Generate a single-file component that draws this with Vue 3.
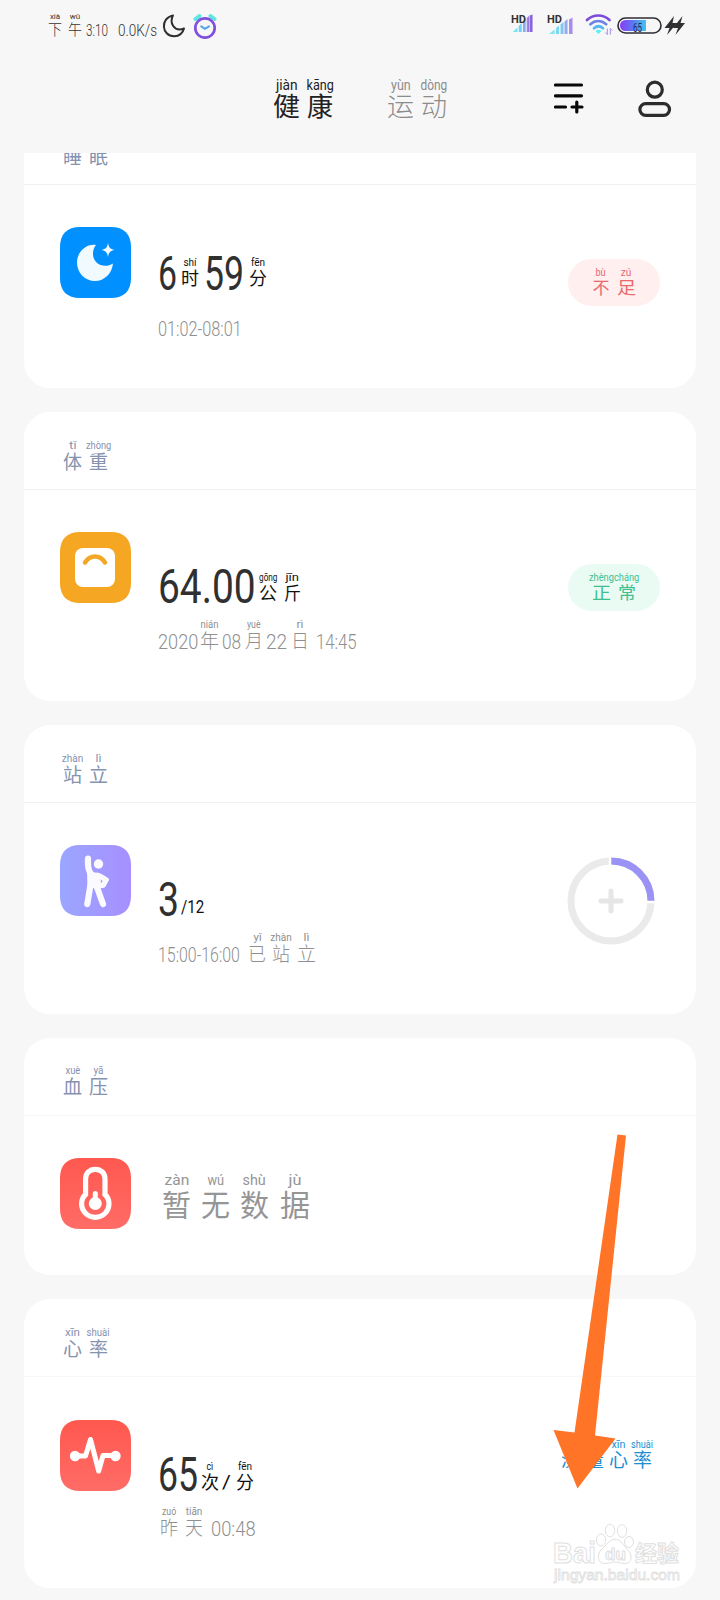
<script setup>
const fit = (el, { value }) => {
  if (!value) return
  el.style.transform = 'none'
  const natural = el.offsetWidth
  if (natural) el.style.transform = `translateX(${(value - natural) / 2}px) scaleX(${value / natural})`
}
const center = (el, { value }) => {
  el.style.transform = 'none'
  const natural = el.offsetWidth
  if (natural) el.style.transform = `scaleX(${value / natural})`
}
const vFit = { mounted: fit, updated: fit }
const vPinyin = { mounted: center, updated: center }

// t: text, w: width, g: gap before, p: pinyin, pw: pinyin width, b: raise above the row's bottom, k: kind
const statusLeft = [
  { t: '下', w: 14, g: 0, p: 'xià', pw: 10, k: 'han' },
  { t: '午', w: 14, g: 6, p: 'wǔ', pw: 10, k: 'han' },
  { t: '3:10', w: 22, g: 4, b: 1 },
  { t: '0.0K/s', w: 39, g: 10, b: 1 },
]
const tabs = [
  { name: 'health', runs: [
    { t: '健', w: 27, g: 0, p: 'jiàn', pw: 22, k: 'han' },
    { t: '康', w: 26, g: 7, p: 'kāng', pw: 27, k: 'han' } ] },
  { name: 'sport', runs: [
    { t: '运', w: 27, g: 0, p: 'yùn', pw: 20, k: 'han' },
    { t: '动', w: 26, g: 7, p: 'dòng', pw: 27, k: 'han' } ] },
]
const title = (a, pa, wa, b, pb, wb) => [
  { t: a, w: 19, g: 0, p: pa, pw: wa, k: 'han' },
  { t: b, w: 19, g: 7, p: pb, pw: wb, k: 'han' },
]
const cards = [
  {
    id: 'sleep', title: title('睡', '', 0, '眠', '', 0),
    value: [
      { t: '6', w: 19, g: 0, k: 'big' },
      { t: '时', w: 18, g: 4, p: 'shí', pw: 13, b: 3, k: 'han' },
      { t: '59', w: 40, g: 5, k: 'big' },
      { t: '分', w: 18, g: 5, p: 'fēn', pw: 14, b: 3, k: 'han' },
    ],
    sub: [{ t: '01:02-08:01', w: 84, g: 0 }],
    badge: [
      { t: '不', w: 17, g: 0, p: 'bù', pw: 10, k: 'han' },
      { t: '足', w: 19, g: 7, p: 'zú', pw: 10, k: 'han' },
    ],
  },
  {
    id: 'weight', title: title('体', 'tǐ', 8, '重', 'zhòng', 25),
    value: [
      { t: '64.00', w: 98, g: 0, k: 'big' },
      { t: '公', w: 18, g: 3, p: 'gōng', pw: 18, b: 1, k: 'han' },
      { t: '斤', w: 17, g: 7, p: 'jīn', pw: 13, b: 1, k: 'han' },
    ],
    sub: [
      { t: '2020', w: 40, g: 0 },
      { t: '年', w: 19, g: 2, p: 'nián', pw: 18, k: 'han low' },
      { t: '08', w: 19, g: 3 },
      { t: '月', w: 18, g: 4, p: 'yuè', pw: 14, k: 'han low' },
      { t: '22', w: 21, g: 3 },
      { t: '日', w: 18, g: 4, p: 'rì', pw: 7, k: 'han low' },
      { t: '14:45', w: 41, g: 7 },
    ],
    badge: [
      { t: '正', w: 19, g: 0, p: 'zhèng', pw: 25, k: 'han' },
      { t: '常', w: 18, g: 7, p: 'cháng', pw: 25, k: 'han' },
    ],
  },
  {
    id: 'stand', title: title('站', 'zhàn', 21, '立', 'lì', 6),
    value: [
      { t: '3', w: 21, g: 0, k: 'big' },
      { t: '/12', w: 23, g: 2, b: 3, k: 'unit' },
    ],
    sub: [
      { t: '15:00-16:00', w: 82, g: 0 },
      { t: '已', w: 18, g: 8, p: 'yǐ', pw: 8, k: 'han low' },
      { t: '站', w: 18, g: 6, p: 'zhàn', pw: 21, k: 'han low' },
      { t: '立', w: 19, g: 7, p: 'lì', pw: 6, k: 'han low' },
    ],
    ring: true,
  },
  {
    id: 'pressure', title: title('血', 'xuè', 15, '压', 'yā', 10),
    value: [
      { t: '暂', w: 29, g: 4, p: 'zàn', pw: 25, k: 'han' },
      { t: '无', w: 29, g: 10, p: 'wú', pw: 17, k: 'han' },
      { t: '数', w: 29, g: 10, p: 'shù', pw: 23, k: 'han' },
      { t: '据', w: 30, g: 11, p: 'jù', pw: 13, k: 'han' },
    ],
  },
  {
    id: 'heart', title: title('心', 'xīn', 15, '率', 'shuài', 23),
    value: [
      { t: '65', w: 40, g: 0, k: 'big' },
      { t: '次', w: 18, g: 3, p: 'cì', pw: 7, k: 'han' },
      { t: '/', w: 9, g: 3, b: 3, k: 'unit' },
      { t: '分', w: 18, g: 5, p: 'fēn', pw: 14, k: 'han' },
    ],
    sub: [
      { t: '昨', w: 18, g: 2, p: 'zuó', pw: 14, k: 'han low' },
      { t: '天', w: 18, g: 7, p: 'tiān', pw: 17, k: 'han low' },
      { t: '00:48', w: 45, g: 8 },
    ],
    action: [
      { t: '测', w: 19, g: 0, p: 'cè', pw: 9, k: 'han' },
      { t: '量', w: 19, g: 5, p: 'liáng', pw: 22, k: 'han' },
      { t: '心', w: 19, g: 5, p: 'xīn', pw: 14, k: 'han' },
      { t: '率', w: 19, g: 5, p: 'shuài', pw: 22, k: 'han' },
    ],
  },
]
</script>

<template>
  <div class="phone">
    <div class="status">
      <div class="runs tiny">
        <span v-for="(r, i) in statusLeft" :key="i" class="run" :class="r.k" :style="{ width: r.w + 'px', marginLeft: r.g + 'px', paddingBottom: (r.b || 0) + 'px' }">
          <span v-if="r.p" class="py"><i v-pinyin="r.pw">{{ r.p }}</i></span><b class="tx" v-fit="r.w">{{ r.t }}</b>
        </span>
      </div>
      <svg class="moon" width="24" height="24" viewBox="0 0 24 24"><path d="M11 1.400C-1.800 3.800-.8 22.200 12.200 22.200c4.800 0 8.400-2.600 9.800-7.700-4.300 1.800-8.500.8-10.800-2.500-2.200-3.200-2-7-.2-10.600z" fill="none" stroke="#2f2f2f" stroke-width="2" stroke-linejoin="round" /></svg>
      <svg class="alarm" width="24" height="26" viewBox="0 0 24 26">
        <path d="M2.500 6 6.500 3M17.500 3l4 3" stroke="#5fe6e2" stroke-width="4" stroke-linecap="round" />
        <circle cx="12" cy="15" r="9.700" fill="#f7f7f7" stroke="#8150dc" stroke-width="2.700" />
        <path d="m8.200 13.300 3.800 2.500 4-2.500" fill="none" stroke="#55a4e8" stroke-width="2" stroke-linecap="round" stroke-linejoin="round" />
      </svg>
      <svg class="signals" width="175" height="24" viewBox="0 0 175 24">
        <defs>
          <linearGradient id="sig" x1="0" x2="1"><stop offset="0" stop-color="#79f2ee" /><stop offset=".45" stop-color="#74cdf2" /><stop offset=".75" stop-color="#9a85e8" /><stop offset="1" stop-color="#8752d8" /></linearGradient>
          <linearGradient id="sig2" x1="0" x2="1"><stop offset="0" stop-color="#79f5ee" /><stop offset=".5" stop-color="#7ccdf2" /><stop offset="1" stop-color="#ad83ea" /></linearGradient>
          <linearGradient id="bat" x1="0" x2="1"><stop offset="0" stop-color="#8a3cf5" /><stop offset=".5" stop-color="#5c79f5" /><stop offset="1" stop-color="#3fc3f3" /></linearGradient>
        </defs>
        <path fill="url(#sig)" d="M2.500 18 7.500 13.500V18zM8.700 18v-6l3-3v9zM12.900 18V8l2.700-3v13zM16.700 18V4l2.300-2v16zM19.500 18V1.500l3-1V18z" />
        <text x="1" y="9" class="hd" textLength="15" lengthAdjust="spacingAndGlyphs">HD</text>
        <path fill="url(#sig2)" d="M39 20l5.500-4.500V20zM46 20v-6l3-2.500V20zM50.500 20v-9.500l3-2.500v12zM54.500 20V7.500L57.500 5v15zM59 20V5.500l3.500-2V20z" />
        <text x="37" y="9" class="hd" textLength="15" lengthAdjust="spacingAndGlyphs">HD</text>
        <g fill="none" stroke-width="2.700" stroke-linecap="round">
          <path d="M77 6c6.500-6 16-6 22.500 0" stroke="#7c4bdb" />
          <path d="M80.300 10.200c4.900-4 11-4 15.900 0" stroke="#6c83e5" />
          <path d="M84 14.200c2.900-2.500 6.100-2.500 9 0" stroke="#55baf2" />
        </g>
        <path d="M85.500 17c2-1.700 4-1.700 6 0l-3 3z" fill="#5eeff0" />
        <path d="M97.300 14.500v6l-2-2m5 2v-6l2 2" fill="none" stroke="#a48be8" />
        <rect x="108" y="4" width="43" height="15" rx="7.500" fill="none" stroke="#2d2d35" stroke-width="1.600" />
        <path d="M115.500 6H136v11h-20.500a5.500 5.500 0 0 1 0-11z" fill="url(#bat)" />
        <text x="123" y="18" class="pct" textLength="9" lengthAdjust="spacingAndGlyphs">65</text>
        <path d="m164 2-9.500 12h5L157 21l10-12h-4.500zM172.500 2l-9.500 12h5L165.500 21 175 9h-4.500z" fill="#303030" />
      </svg>
    </div>

    <div class="topbar">
      <div v-for="tab in tabs" :key="tab.name" class="runs tab" :class="tab.name">
        <span v-for="(r, i) in tab.runs" :key="i" class="run" :class="r.k" :style="{ width: r.w + 'px', marginLeft: r.g + 'px' }">
          <span class="py"><i v-pinyin="r.pw">{{ r.p }}</i></span><b class="tx" v-fit="r.w">{{ r.t }}</b>
        </span>
      </div>
      <svg class="list" width="30" height="32" viewBox="0 0 30 32"><path d="M1.500 2h26M1.500 12.800h26M1.500 24h10M18 24h10M22.800 19v10" fill="none" stroke="#080808" stroke-width="3.200" stroke-linecap="round" /></svg>
      <svg class="person" width="34" height="38" viewBox="0 0 34 38"><circle cx="16.800" cy="9.700" r="7.500" fill="none" stroke="#2c2c2c" stroke-width="3.200" /><rect x="1.900" y="23.700" width="29.600" height="11.600" rx="5.800" fill="none" stroke="#2c2c2c" stroke-width="3.200" /></svg>
    </div>

    <div class="feed">
      <section v-for="c in cards" :key="c.id" class="card" :class="c.id">
        <header class="runs title">
          <span v-for="(r, i) in c.title" :key="i" class="run" :class="r.k" :style="{ width: r.w + 'px', marginLeft: r.g + 'px' }">
            <span v-if="r.p" class="py"><i v-pinyin="r.pw">{{ r.p }}</i></span><b class="tx" v-fit="r.w">{{ r.t }}</b>
          </span>
        </header>
        <div class="body">
          <svg class="icon" width="71" height="71" viewBox="0 0 71 71">
            <defs>
              <linearGradient id="violet" x1="0" x2="1"><stop offset="0" stop-color="#9ba6ff" /><stop offset="1" stop-color="#a78fff" /></linearGradient>
              <linearGradient id="red" x1="0" x2="0" y1="0" y2="1"><stop offset="0" stop-color="#ff584f" /><stop offset="1" stop-color="#ff6c66" /></linearGradient>
            </defs>
            <path class="tile" d="M0 20C0 7 7 0 20 0h31c13 0 20 7 20 20v31c0 13-7 20-20 20H20C7 71 0 64 0 51z" />
            <g v-if="c.id === 'sleep'" fill="#f0faff">
              <path d="M36 18C26 16.500 17 25 17 35.500c0 10.500 8 18.500 18 18.500 9.500 0 17-7.500 18-17.500C44 42 33 37 33 27c0-3.500.8-6.500 3-9z" />
              <path d="M48 16c.8 4.500 2 6 6.500 7-4.500 1-5.700 2.500-6.500 7-.8-4.500-2-6-6.500-7 4.500-1 5.700-2.500 6.500-7z" />
            </g>
            <g v-else-if="c.id === 'weight'">
              <rect x="15" y="16" width="40" height="39" rx="8" fill="#fff" />
              <path d="M25 30.500c5-8 15-8 20 0" fill="none" stroke="#f2a727" stroke-width="4.500" stroke-linecap="round" />
            </g>
            <g v-else-if="c.id === 'stand'">
              <circle cx="38.500" cy="19" r="4.700" fill="#fbfaff" />
              <path d="M28 13.500c-.5 8 0 12 3 15.500l2 2M30.500 40l-3.200 19M36.500 41 43 59" fill="none" stroke="#fbfaff" stroke-width="6.200" stroke-linecap="round" />
              <path d="M27 25c2.500 2.500 5 2.500 8 2.500 5 0 8 2 13 5.500 1 .7 1.300 1.600.8 2.600L45.500 41.500c-.7 1.200-2 1.600-4 1.600l-3.500 2L34 43l-6.500 1z" fill="#fbfaff" />
              <path d="M40.800 34.500v4l1.800-2.500z" fill="#a39bfd" />
            </g>
            <g v-else-if="c.id === 'pressure'" fill="none" stroke="#fff">
              <path d="M25.600 36.500V21c0-5.800 4.200-9.700 9.700-9.700s9.700 3.900 9.700 9.700v15.500c2.700 2.500 4 5.500 4 9 0 7.600-6 13.800-13.700 13.800s-13.700-6.200-13.700-13.800c0-3.500 1.300-6.500 4-9z" stroke-width="5.200" />
              <path d="M35.300 35.500v8" stroke-width="5" stroke-linecap="round" /><circle cx="35.300" cy="45.500" r="6.500" fill="#fff" stroke="none" />
            </g>
            <g v-else>
              <path d="M14 36h11.500L30.500 19.500l8.200 31.500 4.300-15.500H56" fill="none" stroke="#fff" stroke-width="5" stroke-linejoin="round" />
              <circle cx="15" cy="36" r="5.200" fill="#fff" /><circle cx="55.500" cy="36" r="5.200" fill="#fff" />
            </g>
          </svg>
          <div class="texts">
            <div class="runs value">
              <span v-for="(r, i) in c.value" :key="i" class="run" :class="r.k" :style="{ width: r.w + 'px', marginLeft: r.g + 'px', paddingBottom: (r.b || 0) + 'px' }">
                <span v-if="r.p" class="py"><i v-pinyin="r.pw">{{ r.p }}</i></span><b class="tx" v-fit="r.w">{{ r.t }}</b>
              </span>
            </div>
            <div v-if="c.sub" class="runs sub">
              <span v-for="(r, i) in c.sub" :key="i" class="run" :class="r.k" :style="{ width: r.w + 'px', marginLeft: r.g + 'px' }">
                <span v-if="r.p" class="py"><i v-pinyin="r.pw">{{ r.p }}</i></span><b class="tx" v-fit="r.w">{{ r.t }}</b>
              </span>
            </div>
          </div>
          <div v-if="c.badge || c.action" class="runs" :class="c.badge ? 'badge' : 'action'">
            <span v-for="(r, i) in c.badge || c.action" :key="i" class="run" :class="r.k" :style="{ width: r.w + 'px', marginLeft: r.g + 'px' }">
              <span class="py"><i v-pinyin="r.pw">{{ r.p }}</i></span><b class="tx" v-fit="r.w">{{ r.t }}</b>
            </span>
          </div>
          <svg v-if="c.ring" class="ring" width="88" height="88" viewBox="0 0 88 88">
            <circle cx="44" cy="44" r="40" fill="none" stroke="#eaeaea" stroke-width="7" />
            <path d="M44 4a40 40 0 0 1 40 40" fill="none" stroke="#9a92f5" stroke-width="7" />
            <path d="M43 0v8M80 45h8" stroke="#fff" stroke-width="2.600" />
            <path d="M44 34v20M34 44h20" stroke="#e6e6e6" stroke-width="5" stroke-linecap="round" />
          </svg>
        </div>
      </section>
    </div>

    <svg class="arrow" width="64" height="356" viewBox="0 0 64 356"><path d="M64.500 2 73 3 42 303l20.500 3L24.500 356 .5 297.500 21.500 300z" transform="translate(0 -.5)" fill="#ff7426" /></svg>

    <svg class="watermark" width="130" height="66" viewBox="0 0 130 66">
      <g fill="#fff" stroke="#e0e0e0" stroke-width="1">
        <text x="2" y="41" font-size="30" font-weight="700" textLength="43" lengthAdjust="spacingAndGlyphs">Bai</text>
        <ellipse cx="50" cy="18" rx="4.700" ry="6" /><ellipse cx="59" cy="8.500" rx="4.700" ry="6.300" /><ellipse cx="71" cy="9" rx="4.700" ry="6.300" /><ellipse cx="78" cy="20" rx="4.500" ry="5.500" />
        <path d="M57 21c4-5 10-5 14 0l6 7c4 4 5 13.500-3 13.500-5 0-6-1.500-10-1.500s-5 1.500-10 1.500c-8 0-8-9-4-13.500z" />
        <text x="54" y="38" font-size="17" font-weight="700" textLength="21" lengthAdjust="spacingAndGlyphs">du</text>
        <text x="84" y="39" font-size="22" font-weight="700" textLength="44" lengthAdjust="spacingAndGlyphs">经验</text>
        <text x="3" y="58" font-size="15" stroke-width=".8" textLength="126" lengthAdjust="spacingAndGlyphs">jingyan.baidu.com</text>
      </g>
    </svg>
  </div>
</template>

<style>
body { background: #f7f7f7; }
</style>
<style scoped>
.phone { position: relative; width: 720px; height: 1600px; overflow: hidden; background: #f7f7f7; font-family: Roboto, "Noto Sans CJK SC", sans-serif; display: flex; flex-direction: column; }
.runs { display: flex; align-items: flex-end; font-weight: 300; --num: 20px; --han: 19px; --py: 10px; --pg: 3px; }
.run { display: flex; flex-direction: column; align-items: flex-start; white-space: nowrap; }
.tx { display: inline-block; font-weight: inherit; font-size: var(--num); line-height: calc(var(--num) * .711); }
.han .tx { font-family: "Liberation Sans", "Noto Sans CJK SC", sans-serif; font-size: var(--han); line-height: var(--han); }
.py { align-self: center; display: flex; justify-content: center; width: 0; margin-bottom: var(--pg); font-size: var(--py); line-height: 8px; font-weight: 400; }
.py i { display: inline-block; flex: none; font-style: normal; font-family: Roboto, sans-serif; }
.status { height: 60px; flex: none; display: flex; align-items: flex-start; color: #333; }
.tiny { --num: 17px; --han: 15px; --py: 8px; --pg: 1px; height: 37px; padding-left: 48px; width: 109px; }
.moon { margin: 14px 0 0 5px; }
.alarm { margin: 13px 0 0 7px; }
.signals { margin: 14px 0 0 293px; }
.hd { font: 700 10.500px Roboto, sans-serif; fill: #333; }
.pct { font: 400 12px Roboto, sans-serif; fill: #1e2f55; }
.topbar { height: 93px; flex: none; display: flex; align-items: flex-start; }
.tab { --han: 26px; --py: 15px; --pg: 5px; height: 60px; }
.health { margin-left: 273px; color: #222; font-weight: 400; }
.sport { margin-left: 54px; color: #8c8c8c; }
.list { margin: 23px 0 0 107px; }
.person { margin: 20px 0 0 54px; }
.feed { flex: 1; overflow: hidden; display: flex; flex-direction: column; padding: 0 24px; }
.card { flex: none; background: #fff; border-radius: 26px; margin-bottom: 24px; }
.sleep { margin-top: -46px; }
.title { height: 60px; padding: 0 0 17px 39px; color: #8592b0; border-bottom: 1px solid #f2f2f2; font-weight: 400; }
.pressure .title, .heart .title { border-bottom-color: #f8f8f8; }
.pressure .title { height: 59px; padding-bottom: 18px; }
.body { display: flex; align-items: flex-start; height: 211px; padding: 0 36px; }
.sleep .body { height: 203px; }
.pressure .body { height: 159px; }
.icon { margin-top: 42px; flex: none; }
.heart .icon { margin-top: 43px; }
.tile { fill: url(#red); }
.sleep .tile { fill: #0090ff; }
.weight .tile { fill: #f5a623; }
.stand .tile { fill: url(#violet); }
.texts { flex: 1; padding-left: 27px; display: flex; flex-direction: column; }
.value { height: 60px; margin-top: 54px; color: #111; --han: 18px; font-weight: 400; }
.big { --num: 48px; color: #303030; }
.unit { --num: 19px; }
.sub { height: 30px; margin-top: 15px; color: #8f8f8f; }
.low { margin-bottom: -2px; }
.sleep .value { margin-top: 46px; }
.heart .value { margin-top: 55px; }
.heart .sub { margin-top: 14px; }
.pressure .value { margin-top: 45px; color: #959595; --han: 30px; --py: 15px; --pg: 7px; }
.badge { flex: none; width: 92px; height: 47px; margin-top: 74px; border-radius: 24px; box-sizing: border-box; padding-bottom: 9px; justify-content: center; --han: 17px; --py: 10px; --pg: 3px; font-weight: 400; }
.sleep .badge { background: #ffefef; color: #e8686c; }
.weight .badge { background: #eafbf4; color: #3fbf90; }
.action { flex: none; height: 93px; margin-right: 8px; color: #1a8fd4; font-weight: 400; --pg: 2px; }
.ring { flex: none; margin: 54px 5px 0 0; }
.arrow { position: absolute; left: 553px; top: 1133px; overflow: visible; }
.watermark { position: absolute; left: 551px; top: 1522px; overflow: visible; font-family: "Liberation Sans", "Noto Sans CJK SC", sans-serif; }
</style>
